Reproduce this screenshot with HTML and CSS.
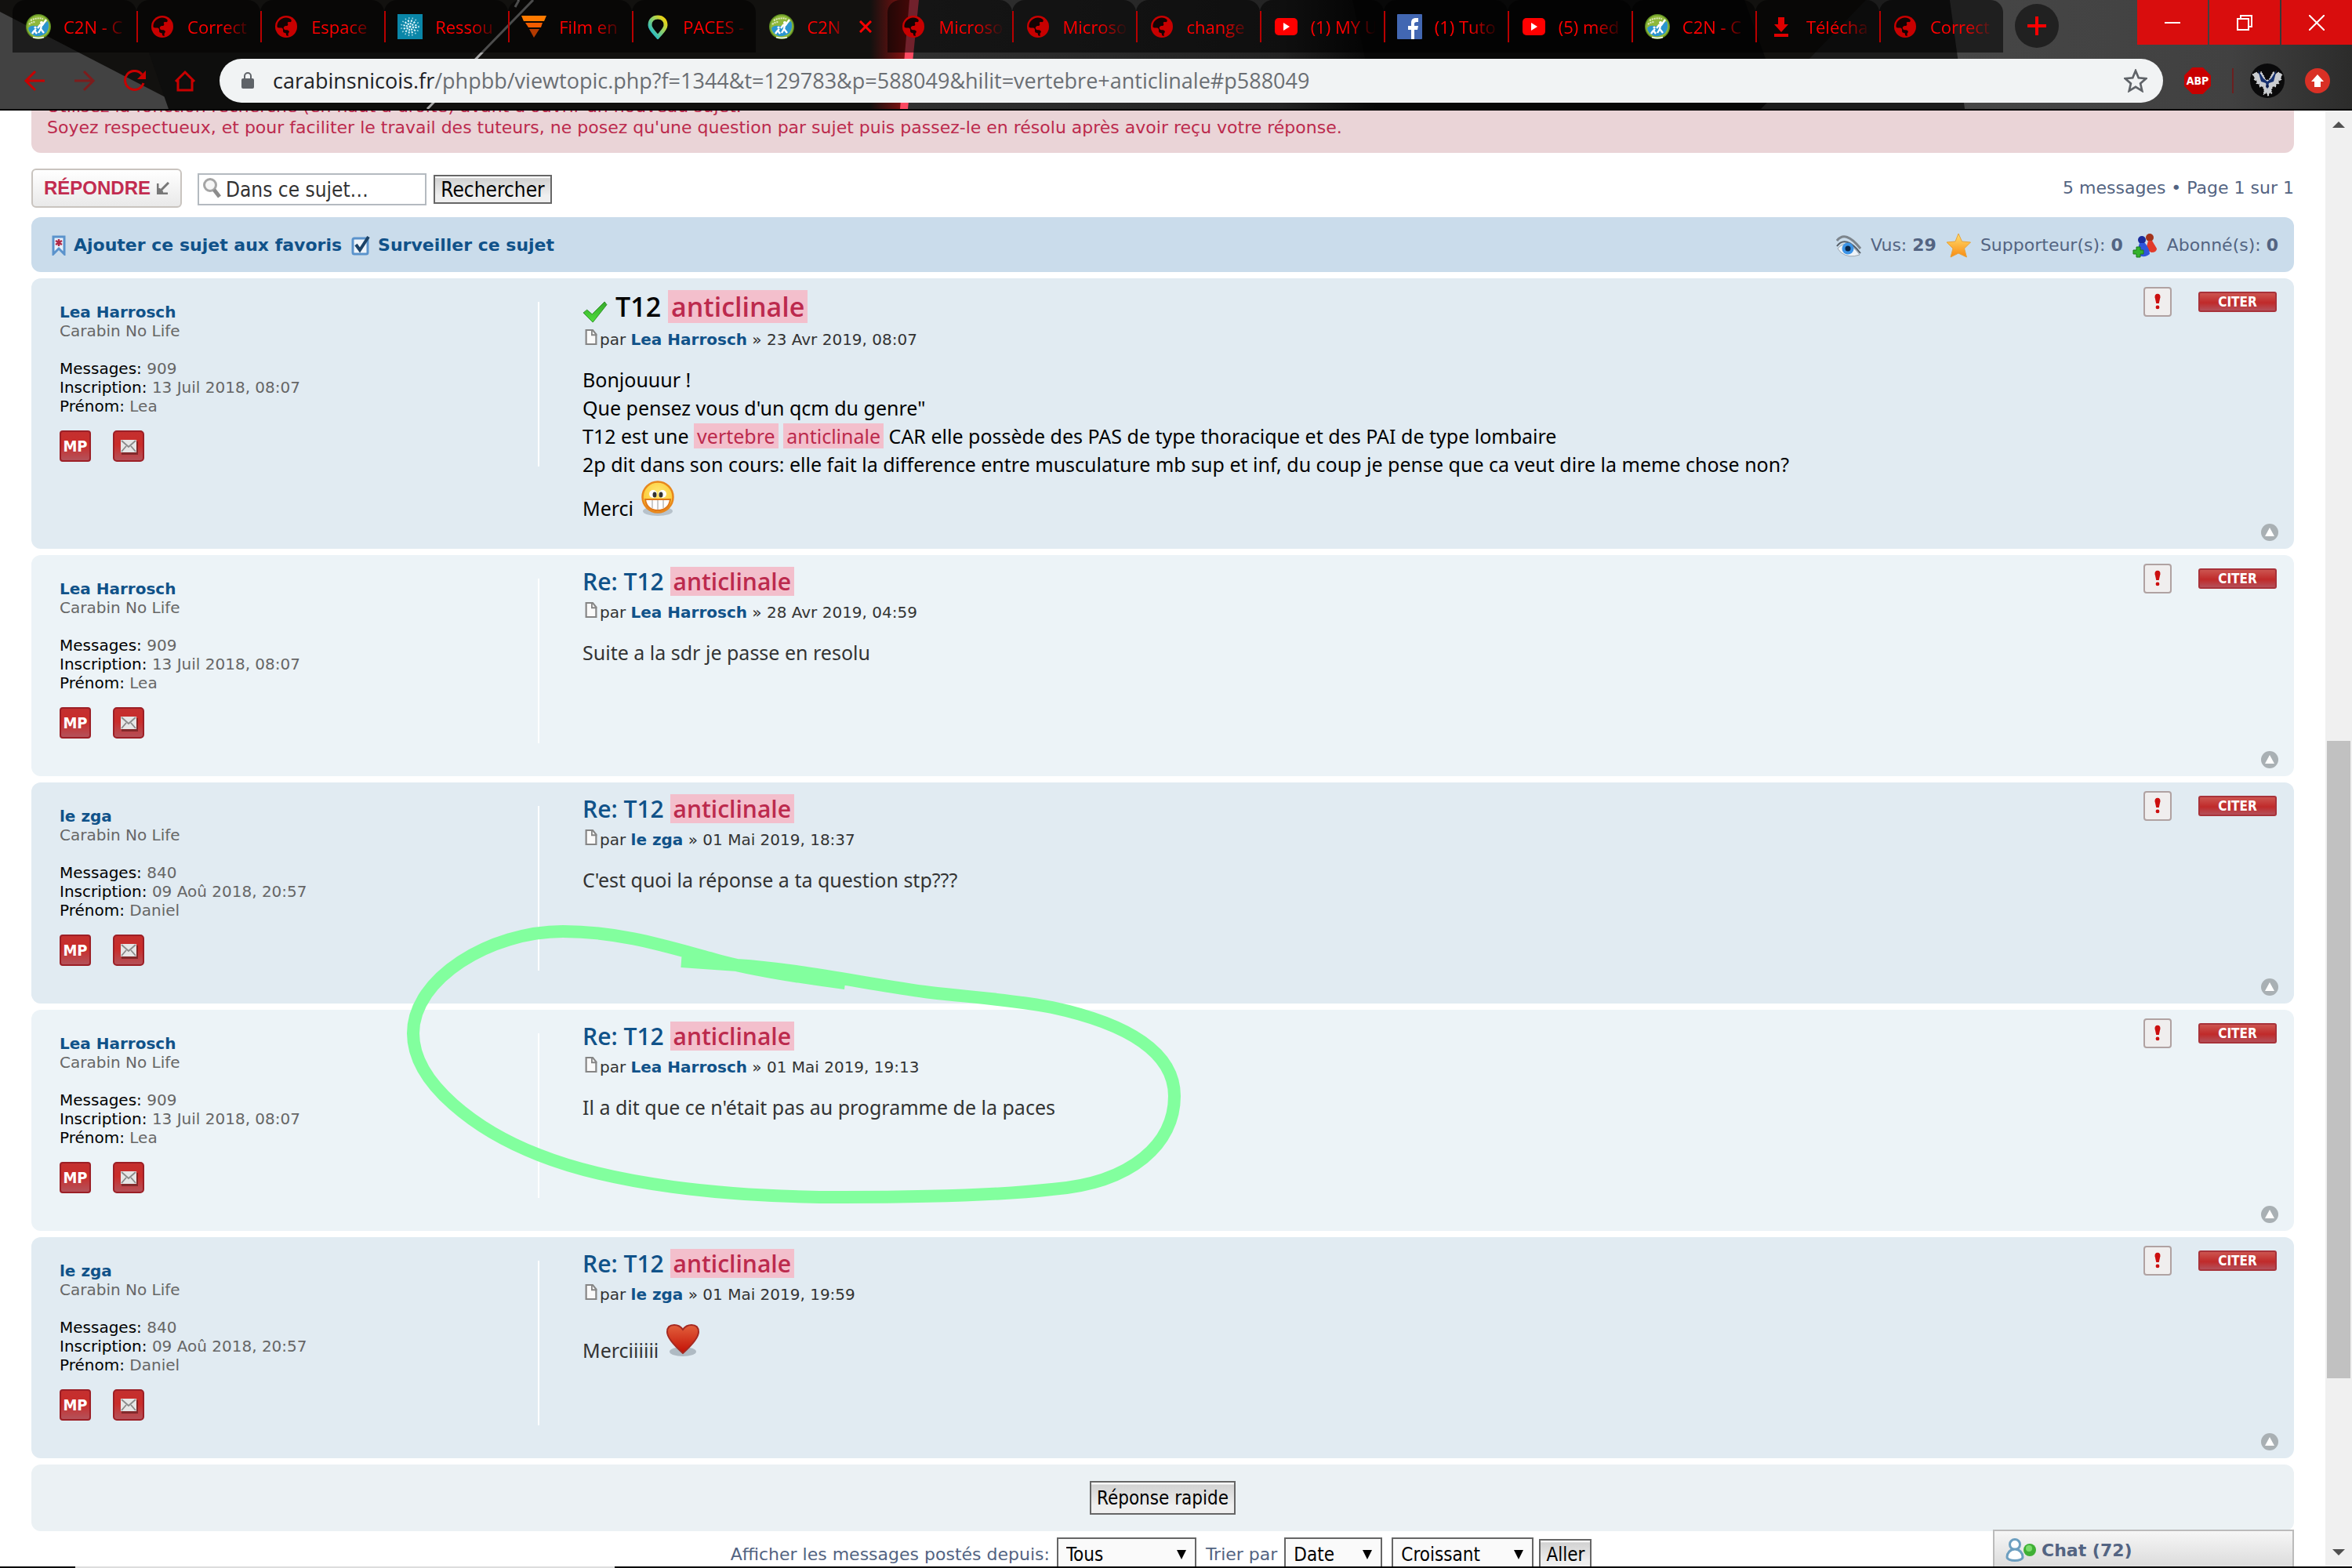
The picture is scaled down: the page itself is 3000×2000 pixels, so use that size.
FILE: index.html
```html
<!DOCTYPE html>
<html lang="fr">
<head>
<meta charset="utf-8">
<title>T12 anticlinale</title>
<link rel="stylesheet" href="styles.css">
</head>
<body>
<svg class="defs" aria-hidden="true">
  <defs>
    <linearGradient id="gRed" x1="0" y1="0" x2="0" y2="1"><stop offset="0" stop-color="#c4302f"/><stop offset=".45" stop-color="#c92c2a"/><stop offset="1" stop-color="#b4525a"/></linearGradient>
    <linearGradient id="gHeart" x1="0" y1="0" x2="0" y2="1"><stop offset="0" stop-color="#e2603c"/><stop offset="1" stop-color="#c21005"/></linearGradient>
    <linearGradient id="gStar" x1="0" y1="0" x2="0" y2="1"><stop offset="0" stop-color="#ffe070"/><stop offset="1" stop-color="#f98b12"/></linearGradient>
    <radialGradient id="gFace" cx=".5" cy=".35" r=".65"><stop offset="0" stop-color="#ffe873"/><stop offset="1" stop-color="#fbc52c"/></radialGradient>
    <linearGradient id="gPin" x1="1" y1="0" x2="0" y2="1"><stop offset="0" stop-color="#ffd400"/><stop offset=".45" stop-color="#8fd06a"/><stop offset="1" stop-color="#00b4e6"/></linearGradient>
    <linearGradient id="gCheck" x1="0" y1="0" x2="0" y2="1"><stop offset="0" stop-color="#36a82c"/><stop offset="1" stop-color="#4fe03c"/></linearGradient>
  </defs>
  <symbol id="c2n" viewBox="0 0 32 32"><circle cx="16" cy="16" r="16" fill="#5f8f22"/><circle cx="16" cy="16" r="14.500" fill="#8fb83a"/><path d="M3 18Q6 14 12 15T28 9Q31 17 26 24Q20 29 12 28Q4 25 3 18Z" fill="#2b95cf"/><path d="M6 8q8-4 16-2M4 13q4-3 8-3" stroke="#dfeac0" stroke-width="2" stroke-dasharray="2 1" fill="none"/><circle cx="20" cy="11" r="2" fill="#fff"/><path d="M26 7l-5 7-3 0-3 4M20 14l-1 5 4 5M19 19l-3 5M13 19l-3 3-2 3M11 21l3 4" stroke="#fff" stroke-width="2.400" fill="none"/><circle cx="12" cy="17" r="1.600" fill="#fff"/><path d="M9 29.500q7 2 14 0" stroke="#fff" stroke-width="1.500" fill="none"/></symbol>
  <symbol id="globe" viewBox="0 0 32 32"><circle cx="16" cy="16" r="14" fill="#c80000"/><path d="M15 4.500c-7 1-11 6-10.500 12 2 2 5 0 6.500 1.500 2 1.500 0 4 2 5.500 1.500 1 3 0 3 2.500 0 1.500 1 2 3 1.500-1-2-.5-3 .5-4 1-1.200 0-2.500-1.500-3-2-.5-4 .2-5-2-.8-1.800.8-3.500 3-3.500 2.200.3 2.800-1.500 2-3-.8-1.600.6-2.400 2.200-2 2 .6 3-1 2.300-2.800-2-2-4-3-7.500-2.700z" fill="#120303"/></symbol>
  <symbol id="youtube" viewBox="0 0 32 32"><rect x="2" y="5" width="29" height="22" rx="5" fill="#f00"/><path d="M13 11l8 5-8 5z" fill="#fff"/></symbol>
  <symbol id="envelope" viewBox="0 0 40 40"><rect x="1" y="1" width="38" height="38" rx="4" fill="url(#gRed)" stroke="#9c1f26" stroke-width="2"/><rect x="11" y="14" width="21" height="17" fill="#5a1a1a" opacity=".6"/><rect x="10" y="12" width="20" height="16" fill="#e6e6e6"/><path d="M11 13l9 8 9-8M11 27l6-7M29 27l-6-7" stroke="#8a8a8a" stroke-width="1.800" fill="none"/></symbol>
  <symbol id="sheet" viewBox="0 0 18 22"><path d="M2 1h9l5 6v14H2z" fill="#fafafa" stroke="#858585" stroke-width="2.400"/><path d="M10 1v7h7" fill="none" stroke="#858585" stroke-width="2"/></symbol>
  <symbol id="bang" viewBox="0 0 12 32"><path d="M6 1c3.500 0 5.500 2.500 5 6.500L8.500 19h-5L1 7.500C.5 3.500 2.500 1 6 1z" fill="#cc0f0f"/><circle cx="6" cy="26" r="3.500" fill="#cc0f0f"/></symbol>
  <symbol id="up" viewBox="0 0 22 22"><circle cx="11" cy="11" r="11" fill="#a9b0b4"/><path d="M11 5l6 11H5z" fill="#fff"/></symbol>
</svg>

<header class="browser">
  <svg class="theme" viewBox="0 0 3000 139" preserveAspectRatio="none" aria-hidden="true">
    <defs>
      <linearGradient id="tGlow"><stop offset="0" stop-color="#a01010" stop-opacity="0"/><stop offset="1" stop-color="#a01010"/></linearGradient>
      <linearGradient id="tFade"><stop offset="0" stop-color="#303030"/><stop offset=".8" stop-color="#232323"/><stop offset="1" stop-color="#080808"/></linearGradient>
      <linearGradient id="tRight"><stop offset="0" stop-color="#464646"/><stop offset=".7" stop-color="#414141"/><stop offset="1" stop-color="#2c2c2b"/></linearGradient>
    </defs>
    <rect width="3000" height="139" fill="#12110f"/>
    <path d="M0 15L240 139H0z" fill="#424242"/>
    <path d="M190 67l25 72h330l60-72z" fill="#0e0e0d"/>
    <path d="M680 0L545 139M662 0l-5 9" stroke="#a8a8a8" stroke-width="3"/>
    <rect x="1110" width="55" height="139" fill="url(#tGlow)"/>
    <path d="M1165 0h560l30 139H1150z" fill="url(#tFade)"/>
    <path d="M1725 0h500l50 139H1755z" fill="#080808"/>
    <path d="M2380 0h110l16 139H2246z" fill="#1c1c1c"/>
    <path d="M2487 0h513v139h-494z" fill="url(#tRight)"/>
    <path d="M1160 0h12l-14 139h-10z" fill="#fb4a62"/>
  </svg>
  <div class="tabstrip">
    <nav class="tabs" aria-label="Onglets">
      <a class="tab first" href="#"><svg class="fav"><use href="#c2n"/></svg><span>C2N - C</span></a>
      <a class="tab" href="#"><svg class="fav"><use href="#globe"/></svg><span>Correct</span></a>
      <a class="tab" href="#"><svg class="fav"><use href="#globe"/></svg><span>Espace</span></a>
      <a class="tab" href="#"><svg class="fav" viewBox="0 0 32 32"><rect width="32" height="32" fill="#0a86a8"/><g fill="none" stroke="#d8f3f8"><circle cx="16" cy="16" r="11" stroke-width="2" stroke-dasharray="1.500 3" opacity=".7"/><circle cx="16" cy="16" r="7.500" stroke-width="2.500" stroke-dasharray="2 2"/><circle cx="16" cy="16" r="4" stroke-width="2.500" stroke-dasharray="2 1"/></g><circle cx="16" cy="16" r="1.500" fill="#fff"/></svg><span>Ressou</span></a>
      <a class="tab" href="#"><svg class="fav" viewBox="0 0 32 32"><path d="M0 2h32l-3 7H3z" fill="#ff7a00"/><path d="M5 11h22l-2 6H9z" fill="#f25c00"/><path d="M10 19h13l-7 11z" fill="#b33a00"/></svg><span>Film en</span></a>
      <a class="tab" href="#"><svg class="fav" viewBox="0 0 32 32"><path d="M16 4c-6 0-10 4-10 10 0 5 5 9 10 15 5-6 10-10 10-15 0-6-4-10-10-10z" fill="none" stroke="url(#gPin)" stroke-width="5"/></svg><span>PACES -</span></a>
      <a class="tab active" href="#" aria-current="page"><svg class="fav"><use href="#c2n"/></svg><span>C2N</span><svg class="close" viewBox="0 0 16 16"><path d="M1 1l14 14M15 1L1 15" stroke="#f00" stroke-width="3"/></svg></a>
      <a class="tab first" href="#"><svg class="fav"><use href="#globe"/></svg><span>Microso</span></a>
      <a class="tab" href="#"><svg class="fav"><use href="#globe"/></svg><span>Microso</span></a>
      <a class="tab" href="#"><svg class="fav"><use href="#globe"/></svg><span>change</span></a>
      <a class="tab" href="#"><svg class="fav"><use href="#youtube"/></svg><span>(1) MY U</span></a>
      <a class="tab" href="#"><svg class="fav" viewBox="0 0 32 32"><rect width="32" height="32" rx="1" fill="#4267b2"/><path d="M18 32V20h-4v-5h4v-4c0-4 2-6 6-6h3v5h-2c-2 0-3 1-3 2v3h5l-1 5h-4v12z" fill="#fff"/></svg><span>(1) Tuto</span></a>
      <a class="tab" href="#"><svg class="fav"><use href="#youtube"/></svg><span>(5) med</span></a>
      <a class="tab" href="#"><svg class="fav"><use href="#c2n"/></svg><span>C2N - C</span></a>
      <a class="tab" href="#"><svg class="fav" viewBox="0 0 32 32"><path d="M12 4h8v9h5l-9 10-9-10h5zM7 25h18v4H7z" fill="#e00000"/></svg><span>Télécha</span></a>
      <a class="tab" href="#"><svg class="fav"><use href="#globe"/></svg><span>Correct</span></a>
    </nav>
    <button class="newtab" aria-label="Nouvel onglet"><svg viewBox="0 0 24 24"><path d="M12 0v24M0 12h24" stroke="#f00" stroke-width="4"/></svg></button>
    <div class="winctl">
      <button aria-label="Réduire"><svg viewBox="0 0 20 20"><path d="M0 10h20" stroke="#fff" stroke-width="2"/></svg></button>
      <button aria-label="Restaurer"><svg viewBox="0 0 20 20"><path d="M1 5h14v14H1zM5 5V1h14v14h-4" fill="none" stroke="#fff" stroke-width="2"/></svg></button>
      <button aria-label="Fermer"><svg viewBox="0 0 20 20"><path d="M0 0l20 20M20 0L0 20" stroke="#fff" stroke-width="2"/></svg></button>
    </div>
  </div>
  <div class="toolbar">
    <button class="nav" aria-label="Précédent"><svg viewBox="0 0 28 28"><path d="M15 2L3 14l12 12M3 14h24" fill="none" stroke="#c80000" stroke-width="3"/></svg></button>
    <button class="nav" aria-label="Suivant"><svg viewBox="0 0 28 28"><path d="M13 2l12 12-12 12M1 14h24" fill="none" stroke="#7d1c1c" stroke-width="3"/></svg></button>
    <button class="nav" aria-label="Actualiser"><svg viewBox="0 0 28 28"><path d="M23 6a12 12 0 1 0 2 11" fill="none" stroke="#c80000" stroke-width="3"/><path d="M28 1v11H17z" fill="#c80000"/></svg></button>
    <button class="nav" aria-label="Accueil"><svg viewBox="0 0 28 28"><path d="M2 15L14 3l12 12M5 13v13h18V13" fill="none" stroke="#c80000" stroke-width="3"/></svg></button>
    <div class="omnibox">
      <svg class="lock" viewBox="0 0 16 22"><rect y="8" width="16" height="13" rx="2" fill="#5f6368"/><path d="M4 9V5a4 4 0 0 1 8 0v4" fill="none" stroke="#5f6368" stroke-width="2"/></svg>
      <p class="url"><b>carabinsnicois.fr</b>/phpbb/viewtopic.php?f=1344&amp;t=129783&amp;p=588049&amp;hilit=vertebre+anticlinale#p588049</p>
      <svg class="fave" viewBox="0 0 28 28"><path d="M14 2l3.500 8.500 9 .8-6.800 6 2 8.700-7.700-4.700L6.300 26l2-8.700-6.800-6 9-.8z" fill="none" stroke="#5f6368" stroke-width="2.500"/></svg>
    </div>
    <button class="abp" aria-label="Adblock Plus">ABP</button>
    <i class="rule"></i>
    <svg class="avatar" viewBox="0 0 44 44"><circle cx="22" cy="22" r="22" fill="#0a0a0b"/><path d="M3 14l5-3 4 3 2-4 3 5 3 6h4l3-6 3-5 2 4 4-3 5 3-2 4 1 3-4 1 1 4-4 0 0 4-4-1-2 5 1 5-3-2-2 5-2-5-4 3 1-6-2-5-4 1 0-4-4 0 1-4-4-1 1-3z" fill="#c9ccd0" stroke="#fff" stroke-dasharray="1 2"/><path d="M10 8l7 11 5 4 5-4 7-11-4 15-6 2-2 8-2-8-6-2z" fill="#16306f"/><circle cx="22" cy="29" r="2" fill="#0b1c4d"/></svg>
    <svg class="update" viewBox="0 0 32 32"><circle cx="16" cy="16" r="16" fill="#d93025"/><path d="M16 8l8 9h-4v7h-8v-7H8z" fill="#fff"/></svg>
  </div>
</header>

<div class="viewport">
  <main class="page">
    <section class="notice">Utilisez la fonction recherche (en haut à droite) avant d'ouvrir un nouveau sujet.<br>Soyez respectueux, et pour faciliter le travail des tuteurs, ne posez qu'une question par sujet puis passez-le en résolu après avoir reçu votre réponse.</section>

    <div class="actions">
      <button class="reply">RÉPONDRE<svg viewBox="0 0 16 16"><path d="M15 1L4 12M1 2v13h13M3 8v5h5" fill="none" stroke="#777" stroke-width="3"/></svg></button>
      <form class="search" onsubmit="return false">
        <label class="searchbox"><svg viewBox="0 0 26 28"><circle cx="10" cy="10" r="7.500" fill="#f6f6f6" stroke="#a5a5a5" stroke-width="3"/><path d="M15 16l7 9" stroke="#8c8c8c" stroke-width="5"/></svg><input type="text" value="Dans ce sujet…" aria-label="Dans ce sujet"></label>
        <button class="btn btn-search">Rechercher</button>
      </form>
      <p class="pagination">5 messages • Page 1 sur 1</p>
    </div>

    <div class="topicbar">
      <a href="#"><svg width="18" height="26" viewBox="0 0 18 26"><path d="M2 2h14v22l-7-7-7 7z" fill="#e9f1fa" stroke="#5b93cc" stroke-width="3"/><path d="M9 5v9M5 7l8 5M13 7l-8 5" stroke="#b02a48" stroke-width="2.500"/></svg>Ajouter ce sujet aux favoris</a>
      <a href="#"><svg width="24" height="26" viewBox="0 0 24 26"><rect x="2" y="4" width="19" height="20" rx="2" fill="#eef4fa" stroke="#5b93cc" stroke-width="3"/><path d="M6 12l5 7L22 2" fill="none" stroke="#1c4266" stroke-width="4"/></svg>Surveiller ce sujet</a>
      <p class="stats">
        <svg viewBox="0 0 32 32"><path d="M1 10Q12-4 31 20" fill="none" stroke="#7d858c" stroke-width="3"/><path d="M1 17Q12 2 31 26" fill="none" stroke="#565e66" stroke-width="2"/><path d="M2 20Q14 6 30 28 16 33 6 25z" fill="#edf3f8" stroke="#9aa5ae"/><circle cx="15" cy="20" r="7.500" fill="#3d94e6"/><circle cx="15" cy="20" r="3.500" fill="#0c2748"/></svg><span>Vus: <b>29</b></span>
        <svg viewBox="0 0 32 32"><path d="M16 1l4.500 10 11 1-8 8 3 11L16 26 6 31l3-11-8-8 11-1z" fill="url(#gStar)" stroke="#e7a33a"/></svg><span>Supporteur(s): <b>0</b></span>
        <svg viewBox="0 0 32 32"><circle cx="22" cy="6" r="5" fill="#a3341c"/><path d="M20 10h5l6 10q0 5-7 5l-7-4z" fill="#e23a2a"/><circle cx="12" cy="9" r="5" fill="#1b2c9c"/><path d="M9 13h7q6 8 6 14-5 5-15 2V20z" fill="#2f55dc"/><path d="M5 18h5v4h4v5h-4v4H5v-4H1v-5h4z" fill="#35b32c" stroke="#1d7a1a"/></svg><span>Abonné(s): <b>0</b></span>
      </p>
    </div>

    <article class="post odd first-post">
      <aside class="profile">
        <a class="name" href="#">Lea Harrosch</a><p class="rank">Carabin No Life</p>
        <dl><div><dt>Messages:</dt> <dd>909</dd></div><div><dt>Inscription:</dt> <dd>13 Juil 2018, 08:07</dd></div><div><dt>Prénom:</dt> <dd>Lea</dd></div></dl>
        <div class="contact"><button class="mp">MP</button><button class="mail" aria-label="E-mail"><svg><use href="#envelope"/></svg></button></div>
      </aside>
      <div class="body">
        <h3><svg class="tick" viewBox="0 0 34 30"><path d="M1 16l5-4 7 6L30 1l3 4-19 24z" fill="url(#gCheck)" stroke="#2c8d25"/></svg>T12 <mark>anticlinale</mark></h3>
        <p class="author"><svg><use href="#sheet"/></svg>par <a href="#">Lea Harrosch</a> » 23 Avr 2019, 08:07</p>
        <div class="content">Bonjouuur !<br>Que pensez vous d'un qcm du genre"<br>T12 est une <mark>vertebre</mark> <mark>anticlinale</mark> CAR elle possède des PAS de type thoracique et des PAI de type lombaire<br>2p dit dans son cours: elle fait la difference entre musculature mb sup et inf, du coup je pense que ca veut dire la meme chose non?<br>Merci <svg class="smiley" viewBox="0 0 48 48"><ellipse cx="24" cy="42" rx="19" ry="6" fill="#8d99a3" opacity=".5"/><circle cx="24" cy="24" r="19.500" fill="url(#gFace)" stroke="#e8871c" stroke-width="2.500"/><ellipse cx="18" cy="20" rx="5" ry="5" fill="#fff"/><ellipse cx="30" cy="20" rx="5" ry="5" fill="#fff"/><ellipse cx="20" cy="21" rx="2.500" ry="3.500" fill="#333"/><ellipse cx="28" cy="21" rx="2.500" ry="3.500" fill="#333"/><path d="M8 27h32q-2 14-16 14T8 27z" fill="#fff" stroke="#e07818" stroke-width="2"/><path d="M17 28v10M24 28v12M31 28v10" stroke="#bbb" stroke-width="1.500"/></svg></div>
      </div>
      <div class="tools"><button class="report" aria-label="Signaler"><svg><use href="#bang"/></svg></button><button class="quote">CITER</button></div>
      <a class="totop" href="#" aria-label="Haut"><svg><use href="#up"/></svg></a>
    </article>

    <article class="post">
      <aside class="profile">
        <a class="name" href="#">Lea Harrosch</a><p class="rank">Carabin No Life</p>
        <dl><div><dt>Messages:</dt> <dd>909</dd></div><div><dt>Inscription:</dt> <dd>13 Juil 2018, 08:07</dd></div><div><dt>Prénom:</dt> <dd>Lea</dd></div></dl>
        <div class="contact"><button class="mp">MP</button><button class="mail" aria-label="E-mail"><svg><use href="#envelope"/></svg></button></div>
      </aside>
      <div class="body">
        <h3>Re: T12 <mark>anticlinale</mark></h3>
        <p class="author"><svg><use href="#sheet"/></svg>par <a href="#">Lea Harrosch</a> » 28 Avr 2019, 04:59</p>
        <div class="content">Suite a la sdr je passe en resolu</div>
      </div>
      <div class="tools"><button class="report" aria-label="Signaler"><svg><use href="#bang"/></svg></button><button class="quote">CITER</button></div>
      <a class="totop" href="#" aria-label="Haut"><svg><use href="#up"/></svg></a>
    </article>

    <article class="post odd">
      <aside class="profile">
        <a class="name" href="#">le zga</a><p class="rank">Carabin No Life</p>
        <dl><div><dt>Messages:</dt> <dd>840</dd></div><div><dt>Inscription:</dt> <dd>09 Aoû 2018, 20:57</dd></div><div><dt>Prénom:</dt> <dd>Daniel</dd></div></dl>
        <div class="contact"><button class="mp">MP</button><button class="mail" aria-label="E-mail"><svg><use href="#envelope"/></svg></button></div>
      </aside>
      <div class="body">
        <h3>Re: T12 <mark>anticlinale</mark></h3>
        <p class="author"><svg><use href="#sheet"/></svg>par <a href="#">le zga</a> » 01 Mai 2019, 18:37</p>
        <div class="content">C'est quoi la réponse a ta question stp???</div>
      </div>
      <div class="tools"><button class="report" aria-label="Signaler"><svg><use href="#bang"/></svg></button><button class="quote">CITER</button></div>
      <a class="totop" href="#" aria-label="Haut"><svg><use href="#up"/></svg></a>
    </article>

    <article class="post">
      <aside class="profile">
        <a class="name" href="#">Lea Harrosch</a><p class="rank">Carabin No Life</p>
        <dl><div><dt>Messages:</dt> <dd>909</dd></div><div><dt>Inscription:</dt> <dd>13 Juil 2018, 08:07</dd></div><div><dt>Prénom:</dt> <dd>Lea</dd></div></dl>
        <div class="contact"><button class="mp">MP</button><button class="mail" aria-label="E-mail"><svg><use href="#envelope"/></svg></button></div>
      </aside>
      <div class="body">
        <h3>Re: T12 <mark>anticlinale</mark></h3>
        <p class="author"><svg><use href="#sheet"/></svg>par <a href="#">Lea Harrosch</a> » 01 Mai 2019, 19:13</p>
        <div class="content">Il a dit que ce n'était pas au programme de la paces</div>
      </div>
      <div class="tools"><button class="report" aria-label="Signaler"><svg><use href="#bang"/></svg></button><button class="quote">CITER</button></div>
      <a class="totop" href="#" aria-label="Haut"><svg><use href="#up"/></svg></a>
      <svg class="lasso" viewBox="510 1180 1000 360" aria-hidden="true"><path d="M1078 1256C1030 1250 950 1238 905 1224C850 1209 790 1190 718 1190C625 1190 527 1250 527 1320C527 1385 610 1445 687 1475C780 1512 920 1529 1075 1529C1170 1529 1270 1527 1342 1519C1445 1511 1498 1460 1498 1400C1498 1345 1440 1308 1342 1287C1290 1277 1240 1274 1187 1268C1110 1258 1020 1238 940 1233L869 1228" fill="none" stroke="#82ff9e" stroke-width="16" stroke-linejoin="round"/></svg>
    </article>

    <article class="post odd">
      <aside class="profile">
        <a class="name" href="#">le zga</a><p class="rank">Carabin No Life</p>
        <dl><div><dt>Messages:</dt> <dd>840</dd></div><div><dt>Inscription:</dt> <dd>09 Aoû 2018, 20:57</dd></div><div><dt>Prénom:</dt> <dd>Daniel</dd></div></dl>
        <div class="contact"><button class="mp">MP</button><button class="mail" aria-label="E-mail"><svg><use href="#envelope"/></svg></button></div>
      </aside>
      <div class="body">
        <h3>Re: T12 <mark>anticlinale</mark></h3>
        <p class="author"><svg><use href="#sheet"/></svg>par <a href="#">le zga</a> » 01 Mai 2019, 19:59</p>
        <div class="content">Merciiiiii <svg class="smiley" viewBox="0 0 48 48"><ellipse cx="24" cy="40" rx="17" ry="6" fill="#8d99a3" opacity=".6"/><path d="M24 42Q4 24 4 15 4 6 13 6q7 0 11 6 4-6 11-6 9 0 9 9 0 9-20 27z" fill="url(#gHeart)" stroke="#a52a22" stroke-width="2"/></svg></div>
      </div>
      <div class="tools"><button class="report" aria-label="Signaler"><svg><use href="#bang"/></svg></button><button class="quote">CITER</button></div>
      <a class="totop" href="#" aria-label="Haut"><svg><use href="#up"/></svg></a>
    </article>

    <div class="quick"><button class="btn btn-quick">Réponse rapide</button></div>

    <form class="sort" onsubmit="return false">
      <label for="st">Afficher les messages postés depuis:</label>
      <span class="select days"><select id="st"><option>Tous</option></select><svg viewBox="0 0 12 12"><path d="M0 0h12L6 12z"/></svg></span>
      <label for="sk" class="by">Trier par</label>
      <span class="select key"><select id="sk"><option>Date</option></select><svg viewBox="0 0 12 12"><path d="M0 0h12L6 12z"/></svg></span>
      <span class="select dir"><select aria-label="Ordre"><option>Croissant</option></select><svg viewBox="0 0 12 12"><path d="M0 0h12L6 12z"/></svg></span>
      <button class="btn btn-go">Aller</button>
    </form>
    <button class="chat"><svg viewBox="0 0 40 32"><circle cx="12" cy="8" r="6.500" fill="#fff" stroke="#6d9fc0" stroke-width="3"/><path d="M12 14c6 0 10 5 10 10 0 6-20 6-20 0 0-5 4-10 10-10z" fill="#fff" stroke="#6d9fc0" stroke-width="3"/><circle cx="31" cy="15" r="8" fill="#3fb035"/><circle cx="30" cy="13" r="4" fill="#7cdc6c"/></svg>Chat (72)</button>
  </main>
  <div class="scrollbar" aria-hidden="true">
    <svg viewBox="0 0 16 8"><path d="M0 8h16L8 0z" fill="#505050"/></svg>
    <div class="track"><i class="above"></i><i class="thumb"></i><i class="below"></i></div>
    <svg viewBox="0 0 16 8"><path d="M0 0h16L8 8z" fill="#505050"/></svg>
  </div>
</div>
<footer class="edge"></footer>
</body>
</html>
```
FILE: styles.css
```css
* { box-sizing: border-box; }
body {
  margin: 0;
  height: 100vh;
  display: flex;
  flex-direction: column;
  overflow: hidden;
  background: #fff;
  font: 22px/28px "DejaVu Sans", Verdana, sans-serif;
  color: #536482;
}
p, h3, dl, dd { margin: 0; }
button, input, select { margin: 0; padding: 0; border: 0; background: none; font: inherit; color: inherit; }
a { color: #105289; text-decoration: none; font-weight: bold; }
svg { flex: none; }
.defs { position: absolute; width: 0; height: 0; }

/* browser frame */
.browser { position: relative; flex: none; border-bottom: 2px solid #000; font-family: "Open Sans", sans-serif; }
.theme { position: absolute; inset: 0; width: 100%; height: 100%; }
.tabstrip { position: relative; display: flex; height: 67px; padding-left: 16px; }
.tabs { flex: 1; display: flex; min-width: 0; }
.tab {
  flex: 1 1 0;
  min-width: 0;
  display: flex;
  align-items: center;
  padding-right: 10px;
  background: rgba(0, 0, 0, .55);
  border-radius: 16px 16px 0 0;
  color: #f00;
  font-weight: normal;
  font-size: 22px;
}
.tab::before { content: ""; flex: none; width: 2px; height: 40px; margin-right: 15px; background: #b80000; }
.tab.first::before, .tab.active::before { background: none; }
.tab.active { background: none; padding-right: 20px; }
.tab span { flex: 1; min-width: 0; overflow: hidden; white-space: nowrap; mask-image: linear-gradient(90deg, #000 55%, transparent); }
.fav { width: 32px; height: 32px; margin-right: 16px; }
.close { width: 16px; height: 16px; margin-left: 14px; }
.newtab { width: 56px; height: 56px; margin: 5px 100px 0 15px; border-radius: 50%; background: #212121; display: grid; place-items: center; }
.newtab svg { width: 24px; height: 24px; }
.winctl { display: flex; gap: 2px; height: 57px; }
.winctl button { width: 90px; background: #d90d0d; display: grid; place-items: center; }
.winctl svg { width: 20px; height: 20px; }
.toolbar { position: relative; display: flex; align-items: center; height: 72px; padding: 0 28px 0 12px; }
.nav { width: 64px; height: 56px; display: grid; place-items: center; }
.nav svg { width: 28px; height: 28px; }
.omnibox { flex: 1; height: 56px; margin-left: 12px; padding: 0 20px 0 28px; border-radius: 28px; background: #f1f3f4; display: flex; align-items: center; }
.lock { width: 16px; height: 22px; margin-right: 24px; }
.url { flex: 1; font-size: 27px; line-height: 36px; color: #6a6e73; white-space: nowrap; }
.url b { font-weight: normal; color: #202124; }
.fave { width: 30px; height: 30px; }
.abp { width: 34px; height: 34px; margin-left: 27px; background: #c80000; color: #fff; font: bold 14px/34px "DejaVu Sans Condensed", sans-serif; clip-path: polygon(30% 0, 70% 0, 100% 30%, 100% 70%, 70% 100%, 30% 100%, 0 70%, 0 30%); }
.rule { width: 2px; height: 32px; margin: 0 21px 0 27px; background: #6b2020; }
.avatar { width: 44px; height: 44px; margin-right: 26px; }
.update { width: 32px; height: 32px; }

/* forum page */
.viewport { flex: 1; min-height: 0; display: flex; }
.page { position: relative; flex: 1; min-width: 0; overflow: hidden; padding: 0 40px; }
.notice { margin-top: -24px; padding: 5px 20px 19px; border-radius: 12px; background: #ead4d7; color: #bc2a4d; line-height: 27px; }
.actions { display: flex; align-items: center; height: 50px; margin: 20px 0 12px; }
.reply { width: 192px; height: 50px; border: 2px solid #c9c4bf; border-radius: 6px; background: linear-gradient(#fff, #e9e9e9); color: #c22c50; font: bold 24px/44px "Liberation Sans", Arial, sans-serif; display: flex; align-items: center; justify-content: center; gap: 8px; }
.reply svg { width: 16px; height: 16px; }
.search { display: flex; align-items: center; gap: 9px; margin: 3px 0 0 20px; }
.searchbox { display: flex; align-items: center; width: 292px; height: 41px; padding-left: 4px; border: 2px solid #b4bac0; background: #fff; }
.searchbox svg { width: 26px; height: 28px; margin-bottom: 4px; }
.searchbox input { flex: 1; min-width: 0; padding-left: 4px; color: #333; }
.searchbox input, .btn-search { font: 26px/32px "DejaVu Sans Condensed", Tahoma, sans-serif; }
.btn { border: 2px solid #666; background: linear-gradient(#fff 4%, #d2d2d2 8%, #efefef 75%); color: #000; font: 24px/32px "DejaVu Sans Condensed", Tahoma, sans-serif; }
.btn-search { width: 151px; height: 37px; font-size: 26px; }
.pagination { margin-left: auto; }
.topicbar { display: flex; align-items: center; height: 70px; padding: 2px 20px 0 26px; border-radius: 12px; background: #cadceb; }
.topicbar a { display: flex; align-items: center; gap: 10px; margin-right: 12px; }
.stats { display: flex; align-items: center; gap: 12px; margin-left: auto; }
.stats svg { width: 32px; height: 32px; }

.post { position: relative; display: flex; align-items: flex-start; margin-top: 8px; padding: 15px 22px 34px 36px; border-radius: 12px; background: #ecf3f7; color: #333; }
.post.odd { background: #e1ebf2; }
.profile { flex: none; width: 612px; height: 210px; margin: 15px 55px 8px 0; border-right: 2px solid #fff; font-size: 20px; line-height: 24px; color: #666; }
.name { display: block; margin-top: 1px; }
.profile dl { margin: 24px 0 19px; }
.profile dt, .profile dd { display: inline; }
.profile dt { color: #000; }
.contact { display: flex; gap: 28px; }
.contact button { width: 40px; height: 40px; }
.contact svg { display: block; width: 40px; height: 40px; }
.mp { border: 2px solid #9c1f26; border-radius: 4px; background: linear-gradient(#c4302f, #c92c2a 45%, #b4525a); font: bold 20px/36px "DejaVu Sans Condensed", sans-serif; }
.contact .mp { color: #fff; font: bold 20px/36px "DejaVu Sans Condensed", sans-serif; }
.body { flex: 1; min-width: 0; }
.post h3 { font: 600 30px/37px "Open Sans", sans-serif; color: #105289; }
.post mark { display: inline-block; padding: 0 4px; background: #f3bfcc; color: #bc2a4d; }
.post.first-post h3 { font-size: 34px; line-height: 42px; color: #000; }
.tick { width: 32px; height: 28px; margin-right: 10px; vertical-align: -8px; }
.author { margin: 7px 0 19px; font-size: 20px; line-height: 28px; }
.author svg { width: 18px; height: 20px; margin: 0 2px; vertical-align: 0; }
.content { font: 25px/36px "Noto Sans", "Trebuchet MS", sans-serif; }
.content mark { line-height: 32px; }
.first-post .content { color: #000; }
.smiley { width: 48px; height: 48px; vertical-align: baseline; }
.tools { display: flex; align-items: center; gap: 34px; margin-top: -4px; }
.report { width: 36px; height: 38px; border: 2px solid #b0a2a2; border-radius: 4px; background: #f0eeee; display: grid; place-items: center; }
.report svg { width: 10px; height: 22px; }
.quote { width: 100px; height: 26px; border: 2px solid #a8323a; border-radius: 3px; background: linear-gradient(#cc5550, #c02a2a 55%, #b4505a); font: bold 17px/20px "DejaVu Sans Condensed", sans-serif; }
.tools .quote { color: #fff; }
.totop { position: absolute; right: 20px; bottom: 10px; line-height: 0; }
.totop svg { width: 22px; height: 22px; }
.lasso { position: absolute; z-index: 2; left: 470px; top: -110px; width: 1000px; height: 360px; }

.quick { display: grid; place-items: center; height: 85px; margin-top: 8px; border-radius: 12px; background: #ebf1f4; }
.btn-quick { width: 186px; height: 43px; }
.sort { display: flex; justify-content: center; align-items: center; height: 43px; margin-top: 8px; padding-right: 4px; white-space: nowrap; }
.by { margin: 0 9px 0 12px; }
.select { display: grid; grid-template-columns: 1fr auto; align-items: center; height: 43px; border: 2px solid #666; background: #fafafa; margin-right: 12px; }
.select select { grid-area: 1 / 1 / 2 / 3; appearance: none; width: 100%; height: 39px; padding-left: 10px; color: #000; font: 24px/34px "DejaVu Sans Condensed", Tahoma, sans-serif; }
.select svg { grid-area: 1 / 2; width: 12px; height: 12px; margin-right: 11px; pointer-events: none; }
.select.days { width: 178px; margin: 0 0 0 9px; }
.key { width: 125px; }
.select.dir { width: 181px; margin-right: 7px; }
.btn-go { width: 67px; height: 39px; }
.chat { position: absolute; right: 40px; bottom: 0; width: 384px; height: 47px; padding: 4px 0 0 14px; border: 2px solid #bbb; border-bottom: 0; background: linear-gradient(#f6f6f6, #dcdcdc); display: flex; align-items: center; gap: 6px; font-weight: bold; }
.chat svg { width: 40px; height: 32px; }
.scrollbar { flex: none; width: 34px; display: flex; flex-direction: column; align-items: center; padding: 14px 0; background: #f0f0f0; }
.scrollbar svg { width: 16px; height: 8px; }
.track { flex: 1; width: 30px; display: flex; flex-direction: column; }
.above { flex: 782; }
.thumb { flex: 813; background: #c1c1c1; }
.below { flex: 218; }
.edge { flex: none; height: 2px; background: linear-gradient(90deg, #000 96px, #ddd 96px 784px, #000 784px); }
```
